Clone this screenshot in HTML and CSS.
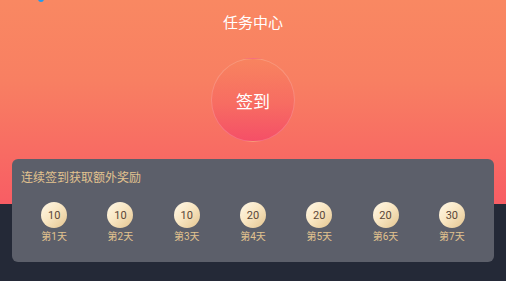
FILE: index.html
```html
<!DOCTYPE html>
<html lang="zh-CN">
<head>
    <meta charset="UTF-8">
    <meta name="viewport" content="width=device-width, initial-scale=1.0">
    <title>任务中心</title>
    <link rel="stylesheet" href="styles.css">
</head>
<body>
    <div class="page">
        <span class="dot"></span>
        <div class="header">
            <h1 class="title">任务中心</h1>
            <div class="sign-btn">签到</div>
        </div>

        <div class="card">
            <div class="card-title">连续签到获取额外奖励</div>
            <div class="days">
                <div class="day"><div class="coin">10</div><div class="day-label">第1天</div></div>
                <div class="day"><div class="coin">10</div><div class="day-label">第2天</div></div>
                <div class="day"><div class="coin">10</div><div class="day-label">第3天</div></div>
                <div class="day"><div class="coin">20</div><div class="day-label">第4天</div></div>
                <div class="day"><div class="coin">20</div><div class="day-label">第5天</div></div>
                <div class="day"><div class="coin">20</div><div class="day-label">第6天</div></div>
                <div class="day"><div class="coin">30</div><div class="day-label">第7天</div></div>
            </div>
        </div>
    </div>
</body>
</html>
```

FILE: styles.css
```css
html, body {
    margin: 0;
    padding: 0;
}

body {
    background-color: #242937;
    font-family: Roboto, "Noto Sans CJK SC", sans-serif;
}

.page {
    position: relative;
    width: 506px;
    height: 281px;
    overflow: hidden;
}

/* 左上角的小圆点 */
.dot {
    position: absolute;
    left: 38px;
    top: -4px;
    width: 6px;
    height: 6px;
    border-radius: 50%;
    background-color: #1e9bf0;
}

.header {
    height: 204px;
    padding-top: 12px;
    box-sizing: border-box;
    background: linear-gradient(to bottom, #f98862 0%, #f87f62 40%, #f86b63 75%, #f85d64 100%);
    display: flex;
    flex-direction: column;
    align-items: center;
}

.title {
    margin: 0;
    font-size: 15px;
    line-height: 22px;
    font-weight: normal;
    color: #ffffff;
}

.sign-btn {
    margin-top: 24px;
    width: 82px;
    height: 82px;
    border-radius: 50%;
    border: 1px solid rgba(255, 255, 255, 0.18);
    background: linear-gradient(to bottom, #f8845f 0%, #f76c62 55%, #f54f67 100%);
    color: #ffffff;
    font-size: 17px;
    display: flex;
    align-items: center;
    justify-content: center;
}

.card {
    margin: -45px 12px 0;
    height: 103px;
    box-sizing: border-box;
    padding: 11px 9px 0;
    background-color: #5c5f6a;
    border-radius: 6px;
}

.card-title {
    font-size: 12px;
    line-height: 16px;
    color: #e2c38f;
}

.days {
    margin-top: 16px;
    display: flex;
}

.day {
    flex: 1;
    display: flex;
    flex-direction: column;
    align-items: center;
}

.coin {
    width: 26px;
    height: 26px;
    border-radius: 50%;
    background: linear-gradient(135deg, #fff8e8 0%, #f9e7c4 45%, #e4c590 100%);
    color: #5a4638;
    font-size: 11px;
    display: flex;
    align-items: center;
    justify-content: center;
}

.day-label {
    margin-top: 2px;
    font-size: 10px;
    line-height: 14px;
    color: #e2c38f;
}
```
